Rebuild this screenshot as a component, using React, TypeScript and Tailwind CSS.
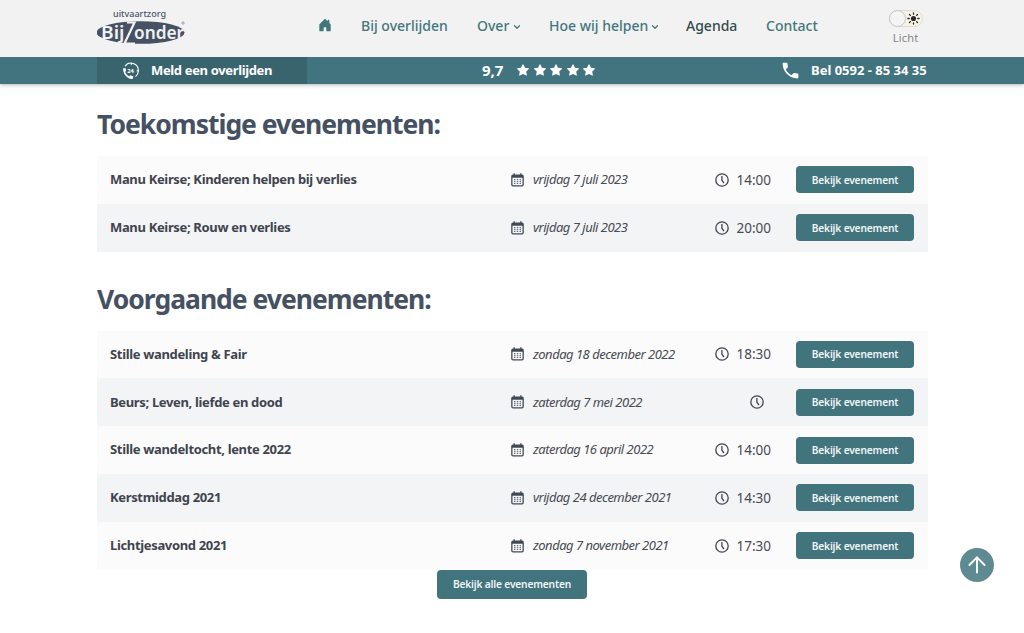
import { ReactNode } from 'react';
import { BsHouseDoorFill, BsStarFill } from 'react-icons/bs';
import { MdPhone } from 'react-icons/md';
import { ArrowUp, ChevronDown } from 'lucide-react';

type EventItem = {
  title: string;
  date: string;
  time?: string;
};

const upcoming: EventItem[] = [
  { title: 'Manu Keirse; Kinderen helpen bij verlies', date: 'vrijdag 7 juli 2023', time: '14:00' },
  { title: 'Manu Keirse; Rouw en verlies', date: 'vrijdag 7 juli 2023', time: '20:00' },
];

const past: EventItem[] = [
  { title: 'Stille wandeling & Fair', date: 'zondag 18 december 2022', time: '18:30' },
  { title: 'Beurs; Leven, liefde en dood', date: 'zaterdag 7 mei 2022' },
  { title: 'Stille wandeltocht, lente 2022', date: 'zaterdag 16 april 2022', time: '14:00' },
  { title: 'Kerstmiddag 2021', date: 'vrijdag 24 december 2021', time: '14:30' },
  { title: 'Lichtjesavond 2021', date: 'zondag 7 november 2021', time: '17:30' },
];

function Logo() {
  return (
    <svg width="92" height="40" viewBox="0 0 92 40" className="block" fontFamily="Noto Sans, sans-serif">
      <text x="16" y="9" fontSize="9.3" fontWeight="500" fill="#4a5568" textLength="53" lengthAdjust="spacingAndGlyphs">
        uitvaartzorg
      </text>
      <ellipse cx="43.5" cy="24.5" rx="44" ry="11.3" fill="#465163" />
      <path d="M30 14.5H37.500L27.5 35.5H38" fill="none" stroke="#f2f2f3" strokeWidth="2.2" />
      <g fill="#f2f2f3" fontSize="18" fontWeight="600">
        <text x="4" y="30.5" textLength="23.5" lengthAdjust="spacingAndGlyphs">Bij</text>
        <text x="37" y="30.5" textLength="50" lengthAdjust="spacingAndGlyphs">onder</text>
      </g>
      <circle cx="86" cy="15" r="1.2" fill="none" stroke="#7b8491" strokeWidth="0.7" />
    </svg>
  );
}

function CallIcon() {
  return (
    <svg width="18" height="18" viewBox="0 0 18 18" fill="none" stroke="white" className="block">
      <path d="M3 4.2A7.3 7.3 0 0 1 16.3 8.5 7.3 7.3 0 0 1 13.5 14.6" strokeWidth="1.1" />
      <path d="M9.3.8v2.2M17 8.8h-2.4" strokeWidth="1" />
      <path d="M1 6.4 3.4 6.1 4.2 9 3.1 9.9Q4.4 12.8 7.4 14.2L8.6 13.2 11.4 14.6 10.8 16.7Q9 17.5 5.6 15.4 1 12.2 1 6.4Z" fill="white" stroke="none" />
      <text x="5.2" y="10.8" fontSize="5.8" fontWeight="700" fill="white" stroke="none" fontFamily="Noto Sans, sans-serif">24</text>
    </svg>
  );
}

function SunIcon() {
  return (
    <svg width="13" height="13" viewBox="0 0 13 13" stroke="#28282e" strokeWidth="1.3" strokeLinecap="round">
      <circle cx="6.5" cy="6.5" r="2.6" fill="#28282e" stroke="none" />
      <path d="M6.5.9v1.3M6.5 10.8v1.3M.9 6.5h1.3M10.8 6.5h1.3M2.5 2.5l.9.9M9.6 9.6l.9.9M2.5 10.5l.9-.9M9.6 3.4l.9-.9" />
    </svg>
  );
}

function CalendarIcon() {
  return (
    <svg width="13" height="14" viewBox="0 0 13 14" className="block shrink-0" fill="#414957">
      <path d="M2 1.5h9a1.8 1.8 0 0 1 1.8 1.8v8.4a1.8 1.8 0 0 1-1.8 1.8H2a1.8 1.8 0 0 1-1.8-1.8V3.3A1.8 1.8 0 0 1 2 1.5zM1.5 4.8v6.6a.9.9 0 0 0 .9.9h8.2a.9.9 0 0 0 .9-.9V4.8z" fillRule="evenodd" />
      <path d="M2.5.2h1.3v2H2.5zM9.2.2h1.3v2H9.2z" />
      <path d="M3 6h1.4v1.2H3zM5.8 6h1.4v1.2H5.8zM8.6 6H10v1.2H8.6zM3 7.9h1.4v1.2H3zM5.8 7.9h1.4v1.2H5.8zM8.6 7.9H10v1.2H8.6zM3 9.8h1.4V11H3zM5.8 9.8h1.4V11H5.8zM8.6 9.8H10V11H8.6z" fillOpacity="0.8" />
    </svg>
  );
}

function ClockIcon() {
  return (
    <svg width="14" height="14" viewBox="0 0 14 14" className="block shrink-0" fill="none" stroke="#414550" strokeWidth="1.3">
      <circle cx="7" cy="7" r="6.2" />
      <path d="M6.9 2.9V7.2L9 10.1" />
    </svg>
  );
}

function NavItem({ children, width, active, menu }: { children: ReactNode; width: string; active?: boolean; menu?: boolean }) {
  return (
    <a href="#" className={`flex items-center whitespace-nowrap text-[14px] font-medium ${width} ${active ? 'text-[#334a4b]' : 'text-[#43777c]'}`}>
      {children}
      {menu && <ChevronDown size={10} strokeWidth={3} className="ml-auto mt-[2px]" />}
    </a>
  );
}

function EventRow({ event }: { event: EventItem }) {
  return (
    <li className="flex h-[47.8px] items-center pl-[13px] pr-[14px] odd:bg-[#fbfbfb] even:bg-[#f2f4f6]">
      <h3 className="w-[401px] whitespace-nowrap text-[13px] font-bold tracking-[-0.34px] text-[#3f444f]">{event.title}</h3>
      <div className="flex w-[180px] items-center gap-[9px] whitespace-nowrap text-[13px] italic tracking-[-0.5px] text-[#474a52]">
        <CalendarIcon />
        <span>{event.date}</span>
      </div>
      <div className="flex w-[80px] items-center justify-end gap-[7px] text-[13.5px] text-[#474a52]">
        <ClockIcon />
        <span className={event.time ? '' : 'w-0'}>{event.time}</span>
      </div>
      <button className="ml-auto h-[27px] w-[118px] whitespace-nowrap rounded-[4px] bg-[#42747e] pt-px text-[10.2px] font-semibold tracking-[-0.17px] text-[#f0f6f7]">
        Bekijk evenement
      </button>
    </li>
  );
}

export default function App() {
  return (
    <div className="relative h-[633px] overflow-hidden bg-white font-['Noto_Sans',sans-serif]">
      <header className="relative shadow-[0_1px_4px_rgba(30,50,60,0.35)]">
        <div className="flex h-[57px] bg-[#f2f2f3] pl-[97px]">
          <div className="w-[222px] pt-[8px]">
            <Logo />
          </div>
          <nav className="flex h-[51px] items-center">
            <a href="#" className="mr-[29px] w-[13px] pb-px text-[#43777c]">
              <BsHouseDoorFill size={14} className="-ml-px" />
            </a>
            <NavItem width="w-[87px] mr-[29px]">Bij overlijden</NavItem>
            <NavItem width="w-[45px] mr-[27px]" menu>Over</NavItem>
            <NavItem width="w-[111px] mr-[26px]" menu>Hoe wij helpen</NavItem>
            <NavItem width="w-[51px] mr-[29px]" active>Agenda</NavItem>
            <NavItem width="w-[52px]">Contact</NavItem>
          </nav>
          <div className="ml-[70.5px] flex w-[34px] flex-col items-center pt-[10px]">
            <div className="flex h-[17px] w-[34px] items-center justify-between rounded-full border border-[#dddcd8] bg-[#f7f4e4] pr-[2px]">
              <span className="-ml-px h-[17px] w-[17px] rounded-full border border-[#c4c4c6] bg-[#f4f4f5]" />
              <SunIcon />
            </div>
            <span className="mt-[3px] text-[11px] leading-4 tracking-[0.2px] text-[#858588]">Licht</span>
          </div>
        </div>
        <div className="flex h-[27px] bg-[#42747f] px-[97px] text-[13px] font-bold text-white">
          <a href="#" className="flex w-[210px] items-center bg-[#3a646d] pl-[25px]">
            <CallIcon />
            <span className="ml-[11px] whitespace-nowrap tracking-[-0.35px]">Meld een overlijden</span>
          </a>
          <div className="ml-[175px] flex items-center">
            <span className="w-[35px] text-[15px]">9,7</span>
            <div className="flex gap-[4.5px] pb-px">
              {[1, 2, 3, 4, 5].map((n) => (
                <BsStarFill key={n} size={12} />
              ))}
            </div>
          </div>
          <a href="#" className="ml-auto flex items-center whitespace-nowrap">
            <MdPhone size={21} />
            <span className="ml-[10px] w-[116px]">Bel 0592 - 85 34 35</span>
          </a>
        </div>
      </header>

      <main className="ml-[97px] w-[831px]">
        <h2 className="flex h-[72px] items-center pt-[10px] text-[26.5px] font-bold tracking-[-1px] text-[#455163]">
          Toekomstige evenementen:
        </h2>
        <ul>
          {upcoming.map((event) => (
            <EventRow key={event.title} event={event} />
          ))}
        </ul>
        <h2 className="flex h-[79px] items-center pt-[17px] text-[26.5px] font-bold tracking-[-1px] text-[#455163]">
          Voorgaande evenementen:
        </h2>
        <ul>
          {past.map((event) => (
            <EventRow key={event.title} event={event} />
          ))}
        </ul>
        <button className="ml-[340px] block h-[29px] w-[150px] whitespace-nowrap rounded-[4px] bg-[#42747e] pt-px text-[10.2px] font-semibold tracking-[-0.17px] text-[#f0f6f7]">
          Bekijk alle evenementen
        </button>
      </main>

      <button className="absolute left-[960px] top-[548px] flex h-[34px] w-[34px] items-center justify-center rounded-full bg-[#5e8b92] text-white">
        <ArrowUp size={26} strokeWidth={1.8} />
      </button>
    </div>
  );
}
